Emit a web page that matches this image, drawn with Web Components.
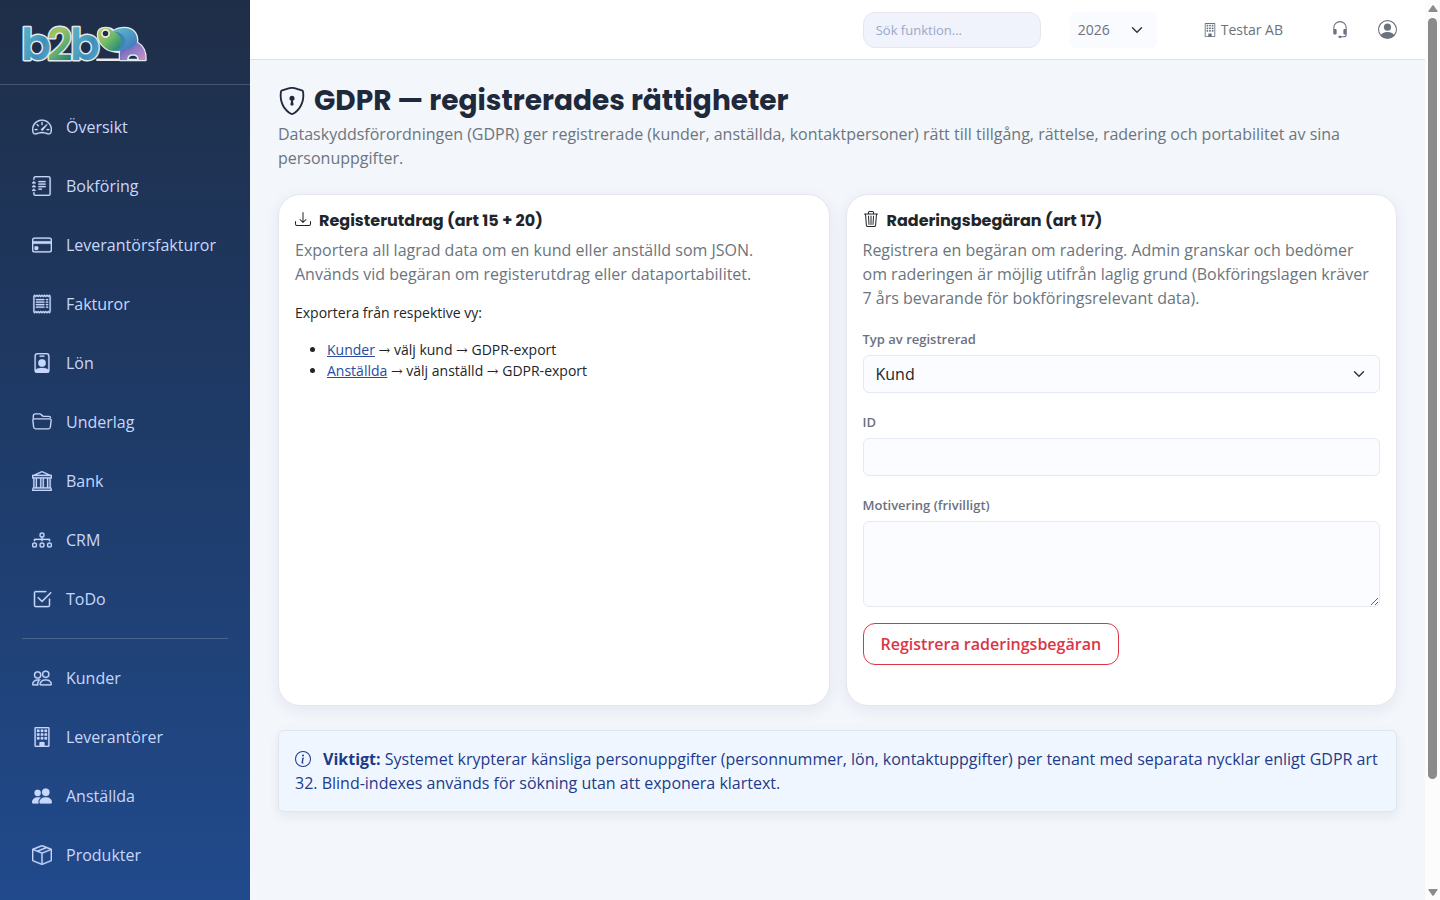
<!DOCTYPE html>
<html lang="sv">
<head>
<meta charset="utf-8">
<meta name="viewport" content="width=device-width, initial-scale=1">
<title>GDPR — registrerades rättigheter</title>
<style>
  body {
    margin: 0;
    background: #f3f6fb;
    color: #212529;
    font: 16px/24px "Open Sans", "DejaVu Serif", sans-serif;
    --heading-font: Poppins, Inter, sans-serif;
    --muted: #6c757d;
    --line: #e5e7eb;
  }
</style>
</head>
<body>
<app-shell>
  <side-bar slot="side">
    <nav-item icon="speedometer">Översikt</nav-item>
    <nav-item icon="journal">Bokföring</nav-item>
    <nav-item icon="card">Leverantörsfakturor</nav-item>
    <nav-item icon="receipt">Fakturor</nav-item>
    <nav-item icon="badge">Lön</nav-item>
    <nav-item icon="folder">Underlag</nav-item>
    <nav-item icon="bank">Bank</nav-item>
    <nav-item icon="diagram">CRM</nav-item>
    <nav-item icon="check">ToDo</nav-item>
    <nav-divider></nav-divider>
    <nav-item icon="people">Kunder</nav-item>
    <nav-item icon="building">Leverantörer</nav-item>
    <nav-item icon="people-fill">Anställda</nav-item>
    <nav-item icon="box">Produkter</nav-item>
  </side-bar>
  <top-bar slot="top"></top-bar>
  <page-title icon="shield">
    GDPR — registrerades rättigheter
    <span slot="lead">Dataskyddsförordningen (GDPR) ger registrerade (kunder, anställda, kontaktpersoner) rätt till tillgång, rättelse, radering och portabilitet av sina personuppgifter.</span>
  </page-title>
  <card-row>
    <info-card icon="download" heading="Registerutdrag (art 15 + 20)">
      <span slot="lead">Exportera all lagrad data om en kund eller anställd som JSON. Används vid begäran om registerutdrag eller dataportabilitet.</span>
      <export-list></export-list>
    </info-card>
    <info-card icon="trash" heading="Raderingsbegäran (art 17)">
      <span slot="lead">Registrera en begäran om radering. Admin granskar och bedömer om raderingen är möjlig utifrån laglig grund (Bokföringslagen kräver 7 års bevarande för bokföringsrelevant data).</span>
      <erasure-form></erasure-form>
    </info-card>
  </card-row>
  <info-note><b>Viktigt:</b> Systemet krypterar känsliga personuppgifter (personnummer, lön, kontaktuppgifter) per tenant med separata nycklar enligt GDPR art 32. Blind-indexes används för sökning utan att exponera klartext.</info-note>
</app-shell>

<script>
const BUILDING = '<path d="M4 2.5a.5.5 0 0 1 .5-.5h1a.5.5 0 0 1 .5.5v1a.5.5 0 0 1-.5.5h-1a.5.5 0 0 1-.5-.5zm3 0a.5.5 0 0 1 .5-.5h1a.5.5 0 0 1 .5.5v1a.5.5 0 0 1-.5.5h-1a.5.5 0 0 1-.5-.5zm3.5-.5a.5.5 0 0 0-.5.5v1a.5.5 0 0 0 .5.5h1a.5.5 0 0 0 .5-.5v-1a.5.5 0 0 0-.5-.5zM4 5.5a.5.5 0 0 1 .5-.5h1a.5.5 0 0 1 .5.5v1a.5.5 0 0 1-.5.5h-1a.5.5 0 0 1-.5-.5zM7.500 5a.5.5 0 0 0-.5.5v1a.5.5 0 0 0 .5.5h1a.5.5 0 0 0 .5-.5v-1a.5.5 0 0 0-.5-.5zm2.500.5a.5.5 0 0 1 .5-.5h1a.5.5 0 0 1 .5.5v1a.5.5 0 0 1-.5.5h-1a.5.5 0 0 1-.5-.5zM4.500 8a.5.5 0 0 0-.5.5v1a.5.5 0 0 0 .5.5h1a.5.5 0 0 0 .5-.5v-1a.5.5 0 0 0-.5-.5zm2.500.5a.5.5 0 0 1 .5-.5h1a.5.5 0 0 1 .5.5v1a.5.5 0 0 1-.5.5h-1a.5.5 0 0 1-.5-.5zm3.500-.5a.5.5 0 0 0-.5.5v1a.5.5 0 0 0 .5.5h1a.5.5 0 0 0 .5-.5v-1a.5.5 0 0 0-.5-.5z"/><path d="M2 1a1 1 0 0 1 1-1h10a1 1 0 0 1 1 1v14a1 1 0 0 1-1 1H3a1 1 0 0 1-1-1zm11 0H3v14h3v-2.500a.5.5 0 0 1 .5-.5h3a.5.5 0 0 1 .5.5V15h3z"/>';
const ICONS = {
  speedometer: '<path d="M8 4a.5.5 0 0 1 .5.5V6a.5.5 0 0 1-1 0V4.500A.5.5 0 0 1 8 4M3.732 5.732a.5.5 0 0 1 .707 0l.915.914a.5.5 0 1 1-.708.708l-.914-.915a.5.5 0 0 1 0-.707M2 10a.5.5 0 0 1 .5-.5h1.586a.5.5 0 0 1 0 1H2.500A.5.5 0 0 1 2 10m9.500 0a.5.5 0 0 1 .5-.5h1.500a.5.5 0 0 1 0 1H12a.5.5 0 0 1-.5-.5m.754-4.246a.39.39 0 0 0-.527-.02L7.547 9.310a.91.91 0 1 0 1.302 1.258l3.434-4.297a.39.39 0 0 0-.029-.518z"/><path fill-rule="evenodd" d="M0 10a8 8 0 1 1 15.547 2.661c-.442 1.253-1.845 1.602-2.932 1.250C11.309 13.488 9.475 13 8 13c-1.474 0-3.310.488-4.615.911-1.087.352-2.490.003-2.932-1.250A8 8 0 0 1 0 10m8-7a7 7 0 0 0-6.603 9.329c.203.575.923.876 1.680.630C4.397 12.533 6.358 12 8 12s3.604.532 4.923.960c.757.245 1.477-.056 1.680-.631A7 7 0 0 0 8 3"/>',
  journal: '<path d="M5 10.500a.5.5 0 0 1 .5-.5h2a.5.5 0 0 1 0 1h-2a.5.5 0 0 1-.5-.5m0-2a.5.5 0 0 1 .5-.5h5a.5.5 0 0 1 0 1h-5a.5.5 0 0 1-.5-.5m0-2a.5.5 0 0 1 .5-.5h5a.5.5 0 0 1 0 1h-5a.5.5 0 0 1-.5-.5m0-2a.5.5 0 0 1 .5-.5h5a.5.5 0 0 1 0 1h-5a.5.5 0 0 1-.5-.5"/><path d="M3 0h10a2 2 0 0 1 2 2v12a2 2 0 0 1-2 2H3a2 2 0 0 1-2-2v-1h1v1a1 1 0 0 0 1 1h10a1 1 0 0 0 1-1V2a1 1 0 0 0-1-1H3a1 1 0 0 0-1 1v1H1V2a2 2 0 0 1 2-2"/><path d="M1 5v-.5a.5.5 0 0 1 1 0V5h.5a.5.5 0 0 1 0 1h-2a.5.5 0 0 1 0-1zm0 3v-.5a.5.5 0 0 1 1 0V8h.5a.5.5 0 0 1 0 1h-2a.5.5 0 0 1 0-1zm0 3v-.5a.5.5 0 0 1 1 0v.5h.5a.5.5 0 0 1 0 1h-2a.5.5 0 0 1 0-1z"/>',
  card: '<path d="M0 4a2 2 0 0 1 2-2h12a2 2 0 0 1 2 2v8a2 2 0 0 1-2 2H2a2 2 0 0 1-2-2zm2-1a1 1 0 0 0-1 1v1h14V4a1 1 0 0 0-1-1zm13 4H1v5a1 1 0 0 0 1 1h12a1 1 0 0 0 1-1z"/><path d="M2 10a1 1 0 0 1 1-1h1a1 1 0 0 1 1 1v1a1 1 0 0 1-1 1H3a1 1 0 0 1-1-1z"/>',
  receipt: '<path d="M1.920.506a.5.5 0 0 1 .434.140L3 1.293l.646-.647a.5.5 0 0 1 .708 0L5 1.293l.646-.647a.5.5 0 0 1 .708 0L7 1.293l.646-.647a.5.5 0 0 1 .708 0L9 1.293l.646-.647a.5.5 0 0 1 .708 0l.646.647.646-.647a.5.5 0 0 1 .708 0l.646.647.646-.647a.5.5 0 0 1 .801.130l.5 1A.5.5 0 0 1 15 2v12a.5.5 0 0 1-.053.224l-.5 1a.5.5 0 0 1-.8.130L13 14.707l-.646.647a.5.5 0 0 1-.708 0L11 14.707l-.646.647a.5.5 0 0 1-.708 0L9 14.707l-.646.647a.5.5 0 0 1-.708 0L7 14.707l-.646.647a.5.5 0 0 1-.708 0L5 14.707l-.646.647a.5.5 0 0 1-.708 0L3 14.707l-.646.647a.5.5 0 0 1-.801-.130l-.5-1A.5.5 0 0 1 1 14V2a.5.5 0 0 1 .053-.224l.5-1a.5.5 0 0 1 .367-.270m.217 1.338L2 2.118v11.764l.137.274.51-.510a.5.5 0 0 1 .707 0l.646.647.646-.646a.5.5 0 0 1 .708 0l.646.646.646-.646a.5.5 0 0 1 .708 0l.646.646.646-.646a.5.5 0 0 1 .708 0l.646.646.646-.646a.5.5 0 0 1 .708 0l.646.646.646-.646a.5.5 0 0 1 .708 0l.509.509.137-.274V2.118l-.137-.274-.51.510a.5.5 0 0 1-.707 0L12 1.707l-.646.647a.5.5 0 0 1-.708 0L10 1.707l-.646.647a.5.5 0 0 1-.708 0L8 1.707l-.646.647a.5.5 0 0 1-.708 0L6 1.707l-.646.647a.5.5 0 0 1-.708 0L4 1.707l-.646.647a.5.5 0 0 1-.708 0z"/><path d="M3 4.500a.5.5 0 0 1 .5-.5h6a.5.5 0 1 1 0 1h-6a.5.5 0 0 1-.5-.5m0 2a.5.5 0 0 1 .5-.5h6a.5.5 0 1 1 0 1h-6a.5.5 0 0 1-.5-.5m0 2a.5.5 0 0 1 .5-.5h6a.5.5 0 1 1 0 1h-6a.5.5 0 0 1-.5-.5m0 2a.5.5 0 0 1 .5-.5h6a.5.5 0 0 1 0 1h-6a.5.5 0 0 1-.5-.5m8-6a.5.5 0 0 1 .5-.5h1a.5.5 0 0 1 0 1h-1a.5.5 0 0 1-.5-.5m0 2a.5.5 0 0 1 .5-.5h1a.5.5 0 0 1 0 1h-1a.5.5 0 0 1-.5-.5m0 2a.5.5 0 0 1 .5-.5h1a.5.5 0 0 1 0 1h-1a.5.5 0 0 1-.5-.5m0 2a.5.5 0 0 1 .5-.5h1a.5.5 0 0 1 0 1h-1a.5.5 0 0 1-.5-.5"/>',
  badge: '<path d="M6.500 2a.5.5 0 0 0 0 1h3a.5.5 0 0 0 0-1zM11 8a3 3 0 1 1-6 0 3 3 0 0 1 6 0"/><path d="M4.500 0A2.500 2.500 0 0 0 2 2.500V14a2 2 0 0 0 2 2h8a2 2 0 0 0 2-2V2.500A2.500 2.500 0 0 0 11.500 0zM3 2.500A1.500 1.500 0 0 1 4.500 1h7A1.500 1.500 0 0 1 13 2.500v10.795a4.200 4.200 0 0 0-.776-.492C11.392 12.387 10.063 12 8 12s-3.392.387-4.224.803a4.200 4.200 0 0 0-.776.492z"/>',
  folder: '<g fill="none" stroke="currentColor" stroke-width="1.100"><path d="M1.100 5.500 1 3.300Q1.100 1.500 2.700 1.500H6.200Q6.800 1.500 7.300 2Q8.300 3.500 9.800 3.500H13.500Q14.800 3.500 14.900 4.900"/><path d="M2 5.500H14Q15.400 5.500 15.300 6.700L14.700 12Q14.500 13.500 13.100 13.500H2.900Q1.500 13.500 1.300 12L.7 6.700Q.6 5.500 2 5.500Z"/></g>',
  bank: '<path d="m8 0 6.610 3h.890a.5.5 0 0 1 .5.5v2a.5.5 0 0 1-.5.5H15v7a.5.5 0 0 1 .485.380l.5 2a.498.498 0 0 1-.485.620H.5a.498.498 0 0 1-.485-.620l.5-2A.5.5 0 0 1 1 13V6H.5a.5.5 0 0 1-.5-.5v-2A.5.5 0 0 1 .5 3h.890zM3.777 3h8.447L8 1zM2 6v7h1V6zm2 0v7h2.500V6zm3.500 0v7h1V6zm2 0v7H12V6zM13 6v7h1V6zm2-1V4H1v1zm-.390 9H1.390l-.250 1h13.720z"/>',
  diagram: '<path fill-rule="evenodd" d="M6 3.500A1.500 1.500 0 0 1 7.500 2h1A1.500 1.500 0 0 1 10 3.500v1A1.500 1.500 0 0 1 8.500 6v1H14a.5.5 0 0 1 .5.5v1a.5.5 0 0 1-1 0V8h-5v.5a.5.5 0 0 1-1 0V8h-5v.5a.5.5 0 0 1-1 0v-1A.5.5 0 0 1 2 7h5.500V6A1.500 1.500 0 0 1 6 4.500zM8.500 5a.5.5 0 0 0 .5-.5v-1a.5.5 0 0 0-.5-.5h-1a.5.5 0 0 0-.5.5v1a.5.5 0 0 0 .5.5zM0 11.500A1.500 1.500 0 0 1 1.500 10h1A1.500 1.500 0 0 1 4 11.500v1A1.500 1.500 0 0 1 2.500 14h-1A1.500 1.500 0 0 1 0 12.500zm1.500-.5a.5.5 0 0 0-.5.5v1a.5.5 0 0 0 .5.5h1a.5.5 0 0 0 .5-.5v-1a.5.5 0 0 0-.5-.5zm4.500.5A1.500 1.500 0 0 1 7.500 10h1a1.500 1.500 0 0 1 1.500 1.500v1A1.500 1.500 0 0 1 8.500 14h-1A1.500 1.500 0 0 1 6 12.500zm1.500-.5a.5.5 0 0 0-.5.5v1a.5.5 0 0 0 .5.5h1a.5.5 0 0 0 .5-.5v-1a.5.5 0 0 0-.5-.5zm4.500.5a1.500 1.500 0 0 1 1.500-1.500h1a1.500 1.500 0 0 1 1.500 1.500v1a1.500 1.500 0 0 1-1.500 1.500h-1a1.500 1.500 0 0 1-1.500-1.500zm1.500-.5a.5.5 0 0 0-.5.5v1a.5.5 0 0 0 .5.5h1a.5.5 0 0 0 .5-.5v-1a.5.5 0 0 0-.5-.5z"/>',
  check: '<path d="M3 14.500A1.500 1.500 0 0 1 1.500 13V3A1.500 1.500 0 0 1 3 1.500h8a.5.5 0 0 1 0 1H3a.5.5 0 0 0-.5.5v10a.5.5 0 0 0 .5.5h10a.5.5 0 0 0 .5-.5V8a.5.5 0 0 1 1 0v5a1.500 1.500 0 0 1-1.500 1.500z"/><path d="m8.354 10.354 7-7a.5.5 0 0 0-.708-.708L8 9.293 5.354 6.646a.5.5 0 1 0-.708.708l3 3a.5.5 0 0 0 .708 0"/>',
  people: '<path d="M15 14s1 0 1-1-1-4-5-4-5 3-5 4 1 1 1 1zm-7.978-1L7 12.996c.001-.264.167-1.030.760-1.720C8.312 10.629 9.282 10 11 10c1.717 0 2.687.630 3.240 1.276.593.690.758 1.457.760 1.720l-.008.002-.014.002zM11 7a2 2 0 1 0 0-4 2 2 0 0 0 0 4m3-2a3 3 0 1 1-6 0 3 3 0 0 1 6 0M6.936 9.280a6 6 0 0 0-1.230-.247A7 7 0 0 0 5 9c-4 0-5 3-5 4q0 1 1 1h4.216A2.240 2.240 0 0 1 5 13c0-1.010.377-2.042 1.090-2.904.243-.294.526-.569.846-.816M4.920 10A5.500 5.500 0 0 0 4 13H1c0-.260.164-1.030.760-1.724.545-.636 1.492-1.256 3.160-1.275ZM1.500 5.500a3 3 0 1 1 6 0 3 3 0 0 1-6 0m3-2a2 2 0 1 0 0 4 2 2 0 0 0 0-4"/>',
  building: BUILDING,
  'people-fill': '<path d="M7 14s-1 0-1-1 1-4 5-4 5 3 5 4-1 1-1 1zm4-6a3 3 0 1 0 0-6 3 3 0 0 0 0 6m-5.784 6A2.240 2.240 0 0 1 5 13c0-1.355.680-2.750 1.936-3.720A6.300 6.300 0 0 0 5 9c-4 0-5 3-5 4s1 1 1 1zM4.500 8a2.500 2.500 0 1 0 0-5 2.500 2.500 0 0 0 0 5"/>',
  box: '<path d="M8.186 1.113a.5.5 0 0 0-.372 0L1.846 3.500l2.404.961L10.404 2zm3.564 1.426L5.596 5 8 5.961 14.154 3.500zm3.250 1.700-6.500 2.600v7.922l6.500-2.600V4.240zM7.500 14.762V6.838L1 4.239v7.923zM7.443.184a1.500 1.500 0 0 1 1.114 0l7.129 2.852A.5.5 0 0 1 16 3.500v8.662a1 1 0 0 1-.629.928l-7.185 2.874a.5.5 0 0 1-.372 0L.630 13.090a1 1 0 0 1-.630-.928V3.500a.5.5 0 0 1 .314-.464z"/>',
  shield: '<path d="M5.338 1.590a61 61 0 0 0-2.837.856.480.480 0 0 0-.328.390c-.554 4.157.726 7.190 2.253 9.188a10.700 10.700 0 0 0 2.287 2.233c.346.244.652.420.893.533q.180.085.293.118a1 1 0 0 0 .101.025 1 1 0 0 0 .1-.025q.114-.034.294-.118c.240-.113.547-.290.893-.533a10.700 10.700 0 0 0 2.287-2.233c1.527-1.997 2.807-5.031 2.253-9.188a.480.480 0 0 0-.328-.390c-.651-.213-1.750-.560-2.837-.855C9.552 1.290 8.531 1.067 8 1.067c-.530 0-1.552.223-2.662.524zM5.072.560C6.157.265 7.310 0 8 0s1.843.265 2.928.560c1.110.300 2.229.655 2.887.870a1.540 1.540 0 0 1 1.044 1.262c.596 4.477-.787 7.795-2.465 9.990a11.800 11.800 0 0 1-2.517 2.453 7 7 0 0 1-1.048.625c-.280.132-.581.240-.829.240s-.548-.108-.829-.240a7 7 0 0 1-1.048-.625 11.800 11.800 0 0 1-2.517-2.453C1.928 10.487.545 7.169 1.141 2.692A1.540 1.540 0 0 1 2.185 1.430 63 63 0 0 1 5.072.560"/><path d="M9.500 6.500a1.500 1.500 0 0 1-1 1.415l.385 1.990a.5.5 0 0 1-.491.595h-.788a.5.5 0 0 1-.490-.595l.384-1.990a1.500 1.500 0 1 1 2-1.415"/>',
  download: '<path d="M.5 9.900a.5.5 0 0 1 .5.5v2.500a1 1 0 0 0 1 1h12a1 1 0 0 0 1-1v-2.500a.5.5 0 0 1 1 0v2.500a2 2 0 0 1-2 2H2a2 2 0 0 1-2-2v-2.500a.5.5 0 0 1 .5-.5"/><path d="M7.646 11.854a.5.5 0 0 0 .708 0l3-3a.5.5 0 0 0-.708-.708L8.500 10.293V1.500a.5.5 0 0 0-1 0v8.793L5.354 8.146a.5.5 0 1 0-.708.708z"/>',
  trash: '<path d="M6.500 1h3a.5.5 0 0 1 .5.5v1H6v-1a.5.5 0 0 1 .5-.5M11 2.500v-1A1.500 1.500 0 0 0 9.500 0h-3A1.500 1.500 0 0 0 5 1.500v1H1.500a.5.5 0 0 0 0 1h.538l.853 10.660A2 2 0 0 0 4.885 16h6.230a2 2 0 0 0 1.994-1.840l.853-10.660h.538a.5.5 0 0 0 0-1zm1.958 1-.846 10.580a1 1 0 0 1-.997.920h-6.230a1 1 0 0 1-.997-.920L3.042 3.500zm-7.487 1a.5.5 0 0 1 .528.470l.5 8.500a.5.5 0 0 1-.998.060L5 5.030a.5.5 0 0 1 .470-.530zm5.058 0a.5.5 0 0 1 .470.530l-.5 8.500a.5.5 0 1 1-.998-.060l.5-8.500a.5.5 0 0 1 .528-.470M8 4.500a.5.5 0 0 1 .5.5v8.500a.5.5 0 0 1-1 0V5a.5.5 0 0 1 .5-.5"/>',
  info: '<path d="M8 15A7 7 0 1 1 8 1a7 7 0 0 1 0 14m0 1A8 8 0 1 0 8 0a8 8 0 0 0 0 16"/><path d="m8.930 6.588-2.290.287-.082.380.450.083c.294.070.352.176.288.469l-.738 3.468c-.194.897.105 1.319.808 1.319.545 0 1.178-.252 1.465-.598l.088-.416c-.2.176-.492.246-.686.246-.275 0-.375-.193-.304-.533zM9 4.500a1 1 0 1 1-2 0 1 1 0 0 1 2 0"/>',
  headset: '<path d="M8 1a5 5 0 0 0-5 5v1h1a1 1 0 0 1 1 1v3a1 1 0 0 1-1 1H3a1 1 0 0 1-1-1V6a6 6 0 1 1 12 0v6a2.500 2.500 0 0 1-2.500 2.500H9.366a1 1 0 0 1-.866.500h-1a1 1 0 1 1 0-2h1a1 1 0 0 1 .866.500H11.500A1.500 1.500 0 0 0 13 12h-1a1 1 0 0 1-1-1V8a1 1 0 0 1 1-1h1V6a5 5 0 0 0-5-5"/>',
  person: '<path d="M11 6a3 3 0 1 1-6 0 3 3 0 0 1 6 0"/><path fill-rule="evenodd" d="M0 8a8 8 0 1 1 16 0A8 8 0 0 1 0 8m8-7a7 7 0 0 0-5.468 11.370C3.242 11.226 4.805 10 8 10s4.757 1.225 5.468 2.370A7 7 0 0 0 8 1"/>'
};
const CHEVRON = `url("data:image/svg+xml,%3Csvg xmlns='http://www.w3.org/2000/svg' viewBox='0 0 16 16'%3E%3Cpath fill='none' stroke='%23343a40' stroke-linecap='round' stroke-linejoin='round' stroke-width='2' d='m2 5 6 6 6-6'/%3E%3C/svg%3E")`;

function define(name, render) {
  customElements.define(name, class extends HTMLElement {
    constructor() {
      super();
      this.attachShadow({ mode: 'open' });
    }
    connectedCallback() {
      this.shadowRoot.innerHTML = render(this);
    }
  });
}

define('bs-icon', el => `
  <style>
    :host { display: inline-block; width: 16px; height: 16px; flex: none; }
    svg { display: block; width: 100%; height: 100%; fill: currentColor; }
  </style>
  <svg viewBox="0 0 16 16" aria-hidden="true">${ICONS[el.getAttribute('name')]}</svg>`);

define('app-shell', () => `
  <style>
    :host { display: grid; grid-template-columns: 250px minmax(0, 1fr) 15px; min-height: 100vh; }
    .page { display: flex; flex-direction: column; }
    main { padding: 23px 28px; display: flex; flex-direction: column; gap: 24px; }
  </style>
  <slot name="side"></slot>
  <div class="page">
    <slot name="top"></slot>
    <main><slot></slot></main>
  </div>
  <scroll-rail></scroll-rail>`);

define('scroll-rail', () => `
  <style>
    :host { display: flex; flex-direction: column; align-items: center; gap: 5px; padding: 5px 0 4px; box-sizing: border-box;
            height: 100vh; position: sticky; top: 0; background: #fcfcfc; }
    svg { display: block; width: 10px; height: 8px; fill: #8b8b8b; flex: none; }
    .track { flex: 1; width: 9px; }
    .thumb { height: 88%; border-radius: 5px; background: #8b8b8b; }
  </style>
  <svg viewBox="0 0 10 8"><path d="M4.300 .6q.7-.8 1.400 0L9.500 6q.4 1-.7 1H1.200Q.1 7 .5 6z"/></svg>
  <div class="track"><div class="thumb"></div></div>
  <svg viewBox="0 0 10 8"><path d="M4.300 7.400q.7.8 1.400 0L9.500 2q.4-1-.7-1H1.200Q.1 1 .5 2z"/></svg>`);

define('side-bar', () => `
  <style>
    :host { display: flex; flex-direction: column; background: linear-gradient(180deg, #1f2e48 0%, #1e3a66 45%, #214a8c 100%); color: #c7d7fb; }
    .brand { display: flex; padding: 22px; height: 40px; border-bottom: 1px solid #455570; }
    nav { display: flex; flex-direction: column; gap: 10px; padding: 17px 22px; }
  </style>
  <a class="brand" href="#" aria-label="b2b"><brand-logo></brand-logo></a>
  <nav><slot></slot></nav>`);

define('brand-logo', () => `
  <style>
    :host { display: block; }
    svg { display: block; width: 126px; height: 40px; overflow: visible; }
    text { font: 600 44px Poppins, Lato, sans-serif; paint-order: stroke; stroke: #dfe9ee; stroke-width: 3px; stroke-linejoin: round; }
  </style>
  <svg viewBox="0 0 126 40">
    <defs>
      <linearGradient id="blue" x1="0" y1="0" x2="1" y2="1"><stop offset="0" stop-color="#5fb9c6"/><stop offset=".45" stop-color="#4d9fc0"/><stop offset=".6" stop-color="#3f8db8"/><stop offset="1" stop-color="#63b3d6"/></linearGradient>
      <linearGradient id="green" x1="0" y1="0" x2=".4" y2="1"><stop offset="0" stop-color="#58ad78"/><stop offset=".4" stop-color="#a3c262"/><stop offset=".7" stop-color="#5cab72"/><stop offset="1" stop-color="#1d7767"/></linearGradient>
      <linearGradient id="head" x1="0" y1="0" x2="1" y2="1"><stop offset="0" stop-color="#c9cf5c"/><stop offset=".5" stop-color="#6fb968"/><stop offset="1" stop-color="#178079"/></linearGradient>
      <linearGradient id="back" x1="0" y1="0" x2="1" y2="1"><stop offset="0" stop-color="#66c3c0"/><stop offset=".5" stop-color="#4d9bc6"/><stop offset="1" stop-color="#4569b6"/></linearGradient>
      <linearGradient id="legs" x1="0" y1="0" x2="1" y2="1"><stop offset="0" stop-color="#5550a8"/><stop offset=".5" stop-color="#8f7cc6"/><stop offset="1" stop-color="#cf8fc6"/></linearGradient>
    </defs>
    <text x="-1" y="38" fill="url(#blue)">b</text>
    <text x="25" y="38" fill="url(#green)">2</text>
    <text x="48" y="38" fill="url(#blue)">b</text>
    <path fill="#eee9ee" d="M75 36.500H99V39H75Q73 38 75 36.500Z"/>
    <path fill="#4d9bc6" stroke="#dfe9ee" stroke-width="2.600" stroke-linejoin="round" d="M98 38H123.500C124 30 121 24 115 20.500C116 11 110 6 102.500 6Q96 6 92 9Q89 6 83.500 6Q76 6 76 12.500Q76 20 83 25.500Q88 29.500 98 30Z"/>
    <path fill="url(#back)" d="M91 9Q96 6 102.500 6C110 6 116 11 115 20.500L109 27Q102 28 96 29Q90 28 88 24Z"/>
    <path fill="#3d87b4" d="M93 9.500Q104 12 103.500 20Q102 28 93 29Q100 19 93 9.500Z"/>
    <path fill="url(#head)" d="M76 12.500Q76 6 83.500 6Q88 6 91 9.500Q98 12 99 18Q99 28 92 29Q87 29 83 25.500Q76 20 76 12.500Z"/>
    <circle cx="83.500" cy="11.500" r="3.600" fill="#1f2e48" stroke="#f0f4ef" stroke-width="1.600"/>
    <path fill="url(#legs)" d="M98 38V30Q99 26 106 27Q112 26 115 20.500C121 24 124 30 123.500 38H117Q116 32 111 32Q106 32 105 38Z"/>
    <path fill="#1f2e48" stroke="#dfe9ee" stroke-width="1.600" d="M106 37.500Q106 33 111 33Q116 33 116 37.500Z"/>
  </svg>`);

define('nav-item', el => `
  <style>
    :host { display: block; }
    a { display: flex; align-items: center; gap: 14px; height: 49px; padding: 0 10px; color: inherit; text-decoration: none; }
    bs-icon { width: 20px; height: 20px; stroke: currentColor; stroke-width: .2px; }
  </style>
  <a href="#"><bs-icon name="${el.getAttribute('icon')}"></bs-icon><span><slot></slot></span></a>`);

define('nav-divider', () => `
  <style>:host { display: block; height: 1px; margin: 5px 0 4px; background: #4a6590; }</style>`);

define('top-bar', () => `
  <style>
    :host { display: flex; align-items: center; justify-content: flex-end; height: 59px; padding: 0 28px; background: #fff;
            border-bottom: 1px solid #d9e1ea; color: #6b7280; font-size: 14px; line-height: 20px; }
    input, select { box-sizing: border-box; height: 36px; font: inherit; color: inherit; }
    input { width: 178px; border: 1px solid #e5e7eb; border-radius: 12px; background: #f0f3fb; padding: 0 12px; font-size: 13px; margin-right: 29px; }
    input::placeholder { color: #9aa8c7; opacity: 1; }
    select { width: 87px; border: 0; border-radius: 6px; padding: 0 8px; appearance: none;
             background: #fafbff ${CHEVRON} right 14px center / 12px no-repeat; margin-right: 46px; }
    a { display: flex; align-items: center; gap: 4px; color: inherit; text-decoration: none; }
    .company bs-icon { width: 14px; height: 14px; }
    .help { margin: 0 28px 0 47px; }
    .help bs-icon { width: 20px; height: 18px; }
    .user bs-icon { width: 19px; height: 19px; }
  </style>
  <input type="search" placeholder="Sök funktion..." aria-label="Sök funktion">
  <select aria-label="Räkenskapsår"><option>2026</option></select>
  <a class="company" href="#"><bs-icon name="building"></bs-icon>Testar AB</a>
  <a class="help" href="#" aria-label="Support"><bs-icon name="headset"></bs-icon></a>
  <a class="user" href="#" aria-label="Konto"><bs-icon name="person"></bs-icon></a>`);

define('page-title', el => `
  <style>
    :host { display: block; }
    h1 { display: flex; align-items: center; gap: 8px; margin: 0 0 3px; font: 700 28px/36px var(--heading-font); color: #1e293b; }
    bs-icon { width: 28px; height: 28px; }
    p { margin: 0; color: var(--muted); }
  </style>
  <h1><bs-icon name="${el.getAttribute('icon')}"></bs-icon><span><slot></slot></span></h1>
  <p><slot name="lead"></slot></p>`);

define('card-row', () => `
  <style>:host { display: grid; grid-template-columns: repeat(2, minmax(0, 1fr)); gap: 16px; }</style>
  <slot></slot>`);

define('info-card', el => `
  <style>
    :host { display: block; padding: 16px; background: #fff; border: 1px solid var(--line); border-radius: 22px; box-shadow: 0 4px 16px rgba(30, 41, 90, .07); }
    h2 { display: flex; align-items: flex-start; gap: 8px; margin: 0 0 8px; font: 700 16px/19px var(--heading-font); }
    p { margin: 0 0 16px; color: var(--muted); }
  </style>
  <h2><bs-icon name="${el.getAttribute('icon')}"></bs-icon>${el.getAttribute('heading')}</h2>
  <p><slot name="lead"></slot></p>
  <slot></slot>`);

define('export-list', () => `
  <style>
    :host { display: block; font-size: 14px; line-height: 21px; }
    p { margin: 0 0 16px; }
    ul { margin: 0; padding-left: 32px; }
    a { color: #274b9f; }
  </style>
  <p>Exportera från respektive vy:</p>
  <ul>
    <li><a href="#">Kunder</a> → välj kund → GDPR-export</li>
    <li><a href="#">Anställda</a> → välj anställd → GDPR-export</li>
  </ul>`);

define('erasure-form', () => `
  <style>
    :host { display: block; padding-bottom: 24px; }
    form { display: flex; flex-direction: column; align-items: flex-start; gap: 16px; }
    .field { width: 100%; }
    label { display: block; margin-bottom: 3px; font-size: 13px; line-height: 26px; font-weight: 600; color: #6b7280; }
    input, select, textarea { display: block; box-sizing: border-box; width: 100%; height: 38px; padding: 6px 12px; font: inherit; color: inherit;
      border: 1px solid #e5e9f2; border-radius: 6px; background: #fbfcff; }
    select { appearance: none; background: #fbfcff ${CHEVRON} right 14px center / 12px no-repeat; }
    textarea { height: 86px; resize: vertical; }
    button { height: 42px; padding: 0 17px; font: inherit; font-weight: 600; color: #dc3545; background: none; border: 1px solid #dc3545; border-radius: 12px; }
  </style>
  <form>
    <div class="field"><label for="kind">Typ av registrerad</label><select id="kind"><option>Kund</option><option>Anställd</option></select></div>
    <div class="field"><label for="subject">ID</label><input id="subject" type="text"></div>
    <div class="field"><label for="reason">Motivering (frivilligt)</label><textarea id="reason"></textarea></div>
    <button type="button">Registrera raderingsbegäran</button>
  </form>`);

define('info-note', () => `
  <style>
    :host { display: block; padding: 16px; border: 1px solid #dfe6ee; border-radius: 6px; background: #eff6ff; color: #1e3a8a; box-shadow: 0 4px 12px rgba(30, 41, 59, .07); }
    bs-icon { margin-right: 12px; vertical-align: -2px; }
  </style>
  <bs-icon name="info"></bs-icon><slot></slot>`);
</script>
</body>
</html>
